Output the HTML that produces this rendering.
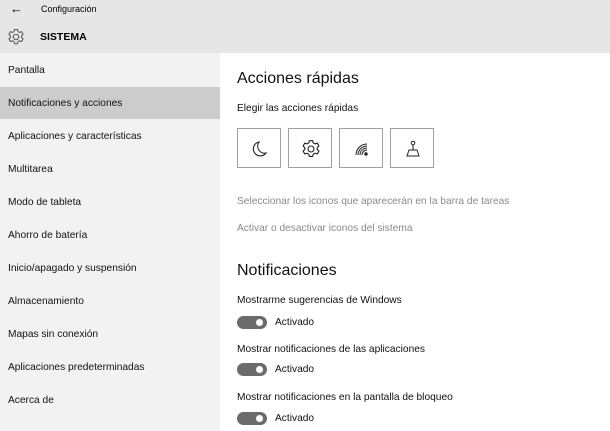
<!DOCTYPE html>
<html><head><meta charset="utf-8"><style>
*{margin:0;padding:0;box-sizing:border-box}
body{width:610px;height:431px;overflow:hidden;font-family:"Liberation Sans",sans-serif;background:#fff;position:relative;color:#000}
.a{position:absolute;white-space:nowrap}
#hdr{left:0;top:0;width:610px;height:53px;background:#e6e6e6}
#side{left:0;top:53px;width:220px;height:378px;background:#f2f2f2}
#sel{left:0;top:87px;width:220px;height:32px;background:#cccccc}
.s{left:8px;font-size:10.2px;line-height:14px;color:#111}
.box{position:absolute;top:128px;width:44px;height:40px;border:1.5px solid #a0a0a0;background:#fff}
.box svg{position:absolute;left:12px;top:10px}
.t{left:237px;font-size:10.2px;line-height:14px;color:#111}
.g{color:#8a8a8a}
.tg{position:absolute;left:237px;width:30px;height:13px;border-radius:7px;background:#6b6b6b}
.tg:after{content:"";position:absolute;right:4px;top:3px;width:7px;height:7px;border-radius:50%;background:#fff}
</style></head><body>
<div class="a" id="hdr"></div>
<div class="a" style="left:10px;top:1px;font-size:13px">←</div>
<div class="a" style="left:41px;top:4px;font-size:9px">Configuración</div>
<svg class="a" style="left:7px;top:28px" width="18" height="18" viewBox="0 0 18 18" fill="none" stroke="#555" stroke-width="1"><path d="M7.5 1.5h3l.5 2 1.6.9 2-.7 1.5 2.6-1.5 1.4v1.8l1.5 1.4-1.5 2.6-2-.7-1.6.9-.5 2h-3l-.5-2-1.6-.9-2 .7-1.5-2.6 1.5-1.4V7.7L1.9 6.3l1.5-2.6 2 .7L7 3.5z"/><circle cx="9" cy="9" r="2.7"/></svg>
<div class="a" style="left:40px;top:31px;font-size:10.5px;font-weight:bold">SISTEMA</div>
<div class="a" id="side"></div>
<div class="a" id="sel"></div>
<div class="a s" style="top:64px">Pantalla</div>
<div class="a s" style="top:97px">Notificaciones y acciones</div>
<div class="a s" style="top:130px">Aplicaciones y características</div>
<div class="a s" style="top:163px">Multitarea</div>
<div class="a s" style="top:196px">Modo de tableta</div>
<div class="a s" style="top:229px">Ahorro de batería</div>
<div class="a s" style="top:262px">Inicio/apagado y suspensión</div>
<div class="a s" style="top:295px">Almacenamiento</div>
<div class="a s" style="top:328px">Mapas sin conexión</div>
<div class="a s" style="top:361px">Aplicaciones predeterminadas</div>
<div class="a s" style="top:394px">Acerca de</div>

<div class="a" style="left:237px;top:70px;font-size:16px;color:#111">Acciones rápidas</div>
<div class="a t" style="top:102px">Elegir las acciones rápidas</div>
<div class="box" style="left:237px"><svg width="20" height="20" viewBox="0 0 20 20" fill="none" stroke="#222" stroke-width="1.1"><path d="M9 3a7 7 0 0 0 7 11A7 7 0 1 1 9 3z"/></svg></div>
<div class="box" style="left:288px"><svg width="20" height="20" viewBox="0 0 18 18" fill="none" stroke="#222" stroke-width="1"><path d="M7.5 1.5h3l.5 2 1.6.9 2-.7 1.5 2.6-1.5 1.4v1.8l1.5 1.4-1.5 2.6-2-.7-1.6.9-.5 2h-3l-.5-2-1.6-.9-2 .7-1.5-2.6 1.5-1.4V7.7L1.9 6.3l1.5-2.6 2 .7L7 3.5z"/><circle cx="9" cy="9" r="2.7"/></svg></div>
<div class="box" style="left:339px"><svg width="20" height="20" viewBox="0 0 20 20" fill="none" stroke="#222" stroke-width="1"><path d="M4 16a11 11 0 0 1 11-11M6 16a9 9 0 0 1 9-9M8 16a7 7 0 0 1 7-7M10 16a5 5 0 0 1 5-5"/><circle cx="14" cy="15" r="1.2" fill="#222"/></svg></div>
<div class="box" style="left:390px"><svg width="20" height="20" viewBox="0 0 20 20" fill="none" stroke="#222" stroke-width="1"><circle cx="10" cy="4" r="1.8"/><path d="M10 6v5M6 11h8l2 6H4zM4 17h12"/></svg></div>
<div class="a t g" style="top:195px">Seleccionar los iconos que aparecerán en la barra de tareas</div>
<div class="a t g" style="top:222px">Activar o desactivar iconos del sistema</div>
<div class="a" style="left:237px;top:262px;font-size:16px;color:#111">Notificaciones</div>
<div class="a t" style="top:294px">Mostrarme sugerencias de Windows</div>
<div class="tg" style="top:316px"></div><div class="a t" style="left:275px;top:316px">Activado</div>
<div class="a t" style="top:343px">Mostrar notificaciones de las aplicaciones</div>
<div class="tg" style="top:363px"></div><div class="a t" style="left:275px;top:363px">Activado</div>
<div class="a t" style="top:391px">Mostrar notificaciones en la pantalla de bloqueo</div>
<div class="tg" style="top:412px"></div><div class="a t" style="left:275px;top:412px">Activado</div>
</body></html>
